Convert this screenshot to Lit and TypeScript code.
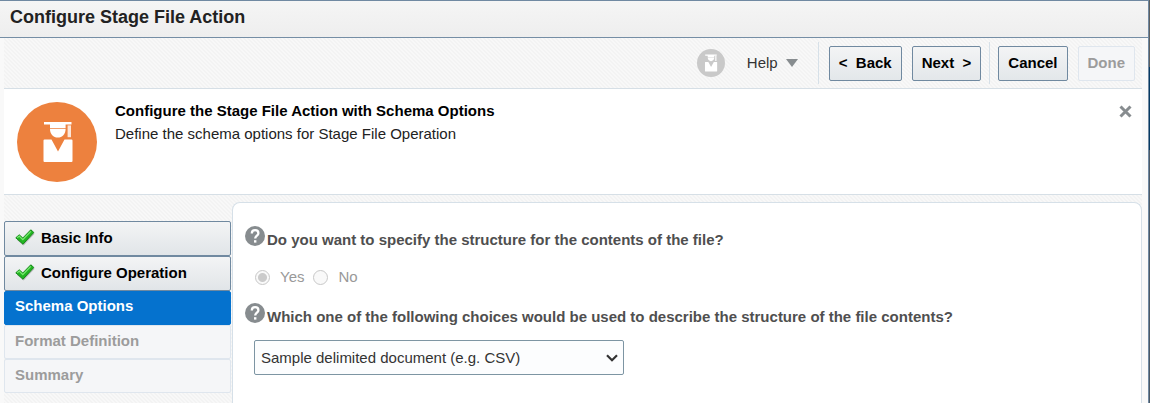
import { LitElement, html, css, svg, nothing } from "lit";
import { customElement, state } from "lit/decorators.js";

type StepState = "done" | "current" | "pending";
interface Step {
  label: string;
  state: StepState;
}

const graduate = svg`
  <path d="M27 20h27.5v2.6H48.6V26.2H33V22.6H27z"></path>
  <path d="M33 27h15.6c0 5-3.4 8.6-7.8 8.6S33 32 33 27z"></path>
  <rect x="50.6" y="23.4" width="3.4" height="11.8" fill-opacity=".8"></rect>
  <path d="M27.5 37.5H34.500l6.500 12 6.500-12h7a1 1 0 0 1 1 1V59a1 1 0 0 1-1 1h-27a1 1 0 0 1-1-1V38.500a1 1 0 0 1 1-1z"></path>`;

const helpIcon = html`
  <svg class="help-icon" viewBox="0 0 20 20" aria-hidden="true">
    <circle cx="10" cy="10" r="10" fill="#878c8f"></circle>
    <path d="M6.8 7.4C6.8 5.3 8.2 4.2 10.1 4.2S13.4 5.4 13.4 7.2C13.4 9.6 10.2 9.7 10.2 12.6"
      fill="none" stroke="#fff" stroke-width="2.3"></path>
    <rect x="9" y="14.2" width="2.4" height="2.4" fill="#fff"></rect>
  </svg>`;

const checkIcon = html`
  <svg class="check-icon" viewBox="0 0 20 17" aria-hidden="true">
    <path d="M2 11 5 8l3.200 3L16.800 2.400l2.800 2.400L8.600 16.600z" fill="#666" opacity=".4"></path>
    <path d="M.8 8.800 4.200 5.800l3.600 3.200L15.800 .8l3 2.600L8 15.200z" fill="#22b522" stroke="#168a1a"
      stroke-linejoin="round"></path>
    <path d="M2.200 8.700 4.200 7.100l3.600 3.500 8-8.200" fill="none" stroke="#7be873" stroke-width="1.300"></path>
  </svg>`;

@customElement("app-root")
export class AppRoot extends LitElement {
  static styles = css`
    :host {
      display: block;
      font: 15px/20px "Liberation Sans", Arial, sans-serif;
      color: #333;
      background: linear-gradient(#5d5f60 0 67px, #063a63 67px 150px, #4b5966 150px);
    }
    * { box-sizing: border-box; }
    .dialog {
      display: flex;
      flex-direction: column;
      min-height: 100vh;
      margin-right: 1px;
      background: #f9f9f9;
      border-top: 1px solid #7089a2;
      border-right: 1px solid #7089a2;
    }
    .title-bar {
      padding: 6px 10px 9px;
      background: linear-gradient(#f5f5f5, #eeeeee);
      border-bottom: 1px solid #758ea5;
    }
    h1 { margin: 0; font-size: 18px; line-height: 21px; color: #222; }
    .content {
      flex: 1;
      display: flex;
      flex-direction: column;
      margin: 0 6px 0 4px;
      background: linear-gradient(45deg, #f8f8f8 25%, #f3f3f3 25% 50%, #f8f8f8 50% 75%, #f3f3f3 75%) 0 0 / 4px 4px;
    }
    .toolbar {
      display: flex;
      align-items: center;
      justify-content: flex-end;
      gap: 10px;
      height: 51px;
      padding-right: 7px;
      border-bottom: 1px solid #d6dfe6;
    }
    .badge { width: 28px; height: 28px; margin-right: 12px; }
    .help-menu {
      display: flex;
      align-items: center;
      gap: 8px;
      margin-right: 10px;
      padding: 0;
      border: 0;
      background: none;
      font: inherit;
      color: #333;
    }
    .help-menu svg { width: 12px; height: 8px; }
    .group { display: flex; gap: 10px; padding-left: 10px; height: 42px; align-items: center; border-left: 1px solid #d6e0e8; }
    .group + .group { margin-left: -2px; padding-left: 8px; }
    .btn {
      height: 35px;
      padding: 0 9px;
      border: 1px solid #7089a0;
      border-radius: 2px;
      background: linear-gradient(#f3f4f5, #e3e7ea);
      font: bold 15px/20px "Liberation Sans", Arial, sans-serif;
      color: #000;
      white-space: pre;
    }
    .btn:disabled { color: #9c9c9c; background: #f5f6f8; border-color: #dfe6ee; }
    .banner {
      display: flex;
      align-items: flex-start;
      gap: 18px;
      min-height: 106px;
      padding: 12px 10px 12px 13px;
      background: #fff;
      border-bottom: 1px solid #d6dfe6;
    }
    .hero { width: 80px; height: 80px; flex: none; margin-top: 1px; }
    .banner-text { flex: 1; color: #222; }
    h2 { margin: 0 0 3px; font-size: 15px; line-height: 20px; color: #000; }
    p { margin: 0; }
    .close { padding: 4px 0; border: 0; background: none; }
    .close svg { display: block; width: 13px; height: 13px; }
    .main { flex: 1; display: flex; padding-top: 7px; gap: 1px; }
    nav { width: 227px; flex: none; padding-top: 19px; }
    ol { margin: 0; padding: 0; list-style: none; }
    .step {
      display: flex;
      align-items: center;
      width: 100%;
      height: 34px;
      padding: 0 10px 2px;
      border: 1px solid #dfe6ee;
      border-radius: 2px;
      background: #f5f6f8;
      font: bold 15px/20px "Liberation Sans", Arial, sans-serif;
      color: #9c9c9c;
      text-align: left;
    }
    .done {
      gap: 6px;
      height: 35px;
      color: #000;
      border-color: #7089a0;
      background: linear-gradient(#f3f4f5, #e1e5e8);
    }
    .current { color: #fff; background: #0572ce; border-color: #0572ce; padding-bottom: 4px; }
    .check-icon { width: 20px; height: 17px; }
    .panel {
      flex: 1;
      padding: 23px 12px;
      background: #fff;
      border: 1px solid #d6e0e8;
      border-bottom: 0;
      border-radius: 8px 8px 0 0;
    }
    fieldset { margin: 0; padding: 0; border: 0; min-width: 0; }
    .question {
      display: flex;
      align-items: flex-start;
      gap: 2px;
      padding: 0;
      font-weight: bold;
      color: #4f4f4f;
    }
    .question-text { padding-top: 4px; }
    .help-icon { width: 20px; height: 20px; flex: none; }
    .radios { display: flex; align-items: center; gap: 9px; padding: 17px 0 16px 10px; color: #999; }
    .radio { display: flex; align-items: center; gap: 10px; }
    .radio input {
      appearance: none;
      width: 15px;
      height: 15px;
      margin: 0;
      border: 1px solid #c8c8c8;
      border-radius: 50%;
      background: #f9f9f9;
    }
    .radio input:checked { background: radial-gradient(circle, #cbcbcb 4px, #f9f9f9 5px); }
    .select-wrap { display: grid; width: 370px; max-width: 100%; margin: 13px 0 0 9px; align-items: center; }
    .select-wrap > * { grid-area: 1 / 1; }
    select {
      appearance: none;
      width: 100%;
      height: 35px;
      padding: 0 28px 0 6px;
      border: 1px solid #7d95a3;
      border-radius: 2px;
      background: #fcfdfe;
      font: inherit;
      color: #333;
    }
    .chevron { width: 12px; height: 8px; justify-self: end; margin-right: 6px; pointer-events: none; }
  `;

  @state() private steps: Step[] = [
    { label: "Basic Info", state: "done" },
    { label: "Configure Operation", state: "done" },
    { label: "Schema Options", state: "current" },
    { label: "Format Definition", state: "pending" },
    { label: "Summary", state: "pending" },
  ];

  render() {
    return html`
      <div class="dialog">
        <header class="title-bar"><h1>Configure Stage File Action</h1></header>
        <div class="content">
          <div class="toolbar">
            <svg class="badge" viewBox="0 0 80 80" aria-hidden="true">
              <circle cx="40" cy="40" r="40" fill="#c9c9c9"></circle>
              <g fill="#fff" transform="translate(-9 -8) scale(1.2)">${graduate}</g>
            </svg>
            <button class="help-menu">
              Help
              <svg viewBox="0 0 12 8" aria-hidden="true"><path d="M0 0h12L6 8z" fill="#878c8f"></path></svg>
            </button>
            <div class="group">
              <button class="btn">${"<  Back"}</button>
              <button class="btn">${"Next  >"}</button>
            </div>
            <div class="group">
              <button class="btn">Cancel</button>
              <button class="btn" disabled>Done</button>
            </div>
          </div>
          <section class="banner">
            <svg class="hero" viewBox="0 0 80 80" aria-hidden="true">
              <circle cx="40" cy="40" r="40" fill="#ed813e"></circle>
              <g fill="#fff">${graduate}</g>
            </svg>
            <div class="banner-text">
              <h2>Configure the Stage File Action with Schema Options</h2>
              <p>Define the schema options for Stage File Operation</p>
            </div>
            <button class="close" aria-label="Close">
              <svg viewBox="0 0 13 13" aria-hidden="true">
                <path d="M1.5 1.5l10 10M11.5 1.5l-10 10" stroke="#878c8f" stroke-width="3"></path>
              </svg>
            </button>
          </section>
          <div class="main">
            <nav>
              <ol>
                ${this.steps.map(
                  (s) => html`<li>
                    <button class="step ${s.state}" ?disabled=${s.state === "pending"}
                      aria-current=${s.state === "current" ? "step" : nothing}>
                      ${s.state === "done" ? checkIcon : nothing}<span>${s.label}</span>
                    </button>
                  </li>`
                )}
              </ol>
            </nav>
            <main class="panel">
              <fieldset>
                <legend class="question">
                  ${helpIcon}<span class="question-text">Do you want to specify the structure for the contents of the file?</span>
                </legend>
                <div class="radios">
                  <label class="radio"><input type="radio" name="structure" checked disabled />Yes</label>
                  <label class="radio"><input type="radio" name="structure" disabled />No</label>
                </div>
              </fieldset>
              <label class="question" for="format">
                ${helpIcon}<span class="question-text">Which one of the following choices would be used to describe the structure of the file contents?</span>
              </label>
              <div class="select-wrap">
                <select id="format">
                  <option>Sample delimited document (e.g. CSV)</option>
                </select>
                <svg class="chevron" viewBox="0 0 12 8" aria-hidden="true">
                  <path d="M1 1.2l5 5 5-5" fill="none" stroke="#333" stroke-width="2.2"></path>
                </svg>
              </div>
            </main>
          </div>
        </div>
      </div>
    `;
  }
}
